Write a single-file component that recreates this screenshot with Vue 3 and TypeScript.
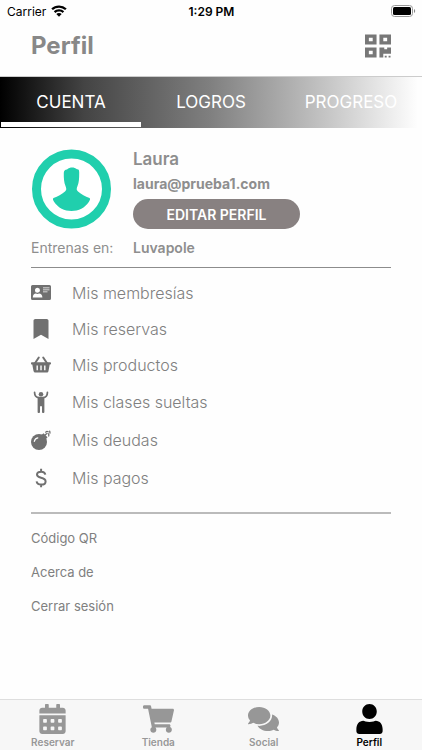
<script setup lang="ts">
import { ref } from 'vue'

type MenuIcon = 'card' | 'bookmark' | 'basket' | 'person' | 'bomb' | 'dollar'
type NavIcon = 'calendar' | 'cart' | 'comments' | 'user'

const tabs: string[] = ['CUENTA', 'LOGROS', 'PROGRESO']
const activeTab = ref<string>('CUENTA')

const menu: { icon: MenuIcon; label: string; tall: boolean }[] = [
  { icon: 'card', label: 'Mis membresías', tall: false },
  { icon: 'bookmark', label: 'Mis reservas', tall: false },
  { icon: 'basket', label: 'Mis productos', tall: false },
  { icon: 'person', label: 'Mis clases sueltas', tall: true },
  { icon: 'bomb', label: 'Mis deudas', tall: true },
  { icon: 'dollar', label: 'Mis pagos', tall: true },
]

const links: string[] = ['Código QR', 'Acerca de', 'Cerrar sesión']

const nav: { icon: NavIcon; label: string }[] = [
  { icon: 'calendar', label: 'Reservar' },
  { icon: 'cart', label: 'Tienda' },
  { icon: 'comments', label: 'Social' },
  { icon: 'user', label: 'Perfil' },
]
const activeNav = ref<string>('Perfil')
</script>

<template>
  <div class="screen">
    <div class="status">
      <span class="carrier">
        Carrier
        <svg class="wifi" viewBox="0 0 16 12" aria-hidden="true">
          <path d="M8 .4C5 .4 2.300 1.500.3 3.400L1.900 5.100A8.900 8.900 0 0 1 8 2.700c2.400 0 4.500.9 6.100 2.400l1.600-1.700A11.200 11.200 0 0 0 8 .4z" />
          <path d="M8 4.200c-2 0-3.800.8-5.200 2l1.600 1.700A5.400 5.400 0 0 1 8 6.500c1.400 0 2.700.5 3.600 1.400l1.600-1.700A7.700 7.700 0 0 0 8 4.200z" />
          <path d="M8 7.900c-1.100 0-2 .4-2.700 1.100L8 11.700 10.700 9A3.900 3.900 0 0 0 8 7.900z" />
        </svg>
      </span>
      <span class="time">1:29 PM</span>
      <svg class="battery" viewBox="0 0 25 12" aria-hidden="true">
        <rect x=".5" y=".5" width="21" height="11" rx="3" fill="none" stroke="#999" />
        <rect x="2" y="2" width="18" height="8" rx="1.500" />
        <path d="M23 4c1.600.5 1.600 3.500 0 4z" fill="#888" />
      </svg>
    </div>

    <header class="header">
      <h1>Perfil</h1>
      <button class="qr" type="button" aria-label="QR">
        <svg viewBox="0 0 27 24" aria-hidden="true">
          <path fill-rule="evenodd" d="M0 0h12v10.500H0zM4 3.500v3.500h4V3.500zM15 0h12v10.500H15zM19 3.500v3.500h4V3.500zM0 13.500h12V24H0zM4 17v3.500h4V17zM15 13.500h5v2h3v-2h4v6.500h-8v4h-4zM20.500 22h2v2h-2zM24.500 22h2v2h-2z" />
        </svg>
      </button>
    </header>

    <nav class="tabs">
      <button
        v-for="tab in tabs"
        :key="tab"
        type="button"
        class="tab"
        :class="{ active: tab === activeTab }"
        @click="activeTab = tab"
      >{{ tab }}</button>
    </nav>

    <main class="content">
      <section class="profile">
        <svg class="avatar" viewBox="0 0 80 80" aria-hidden="true">
          <circle cx="40.500" cy="40" r="35" fill="#fff" stroke="#20cfad" stroke-width="9" />
          <path fill="#20cfad" d="M36 20.500c3-2.500 7-2.500 10-.3 1.800-.2 2.200 1 2.200 3.300 0 6-.2 10-1.700 13.500-1 2.500-1.300 4 .5 5.500 3.500 3 7 4.800 11.500 6.500 1.200.5.300 2.500-.7 4C54 58.800 47.500 62 40.500 62s-13.500-3.200-17.300-9c-1-1.500-1.900-3.500-.7-4 4.500-1.700 8-3.500 11.500-6.500 1.800-1.500 1.500-3 .5-5.500-1.500-3.500-1.800-8-1.700-13 0-2.200 1.200-3.300 3.200-3.500z" />
        </svg>
        <div class="identity">
          <h2>Laura</h2>
          <p class="email">laura@prueba1.com</p>
          <button class="edit" type="button">EDITAR PERFIL</button>
        </div>
        <span class="gym-label">Entrenas en:</span>
        <span class="gym">Luvapole</span>
      </section>

      <ul class="menu">
        <li v-for="item in menu" :key="item.label">
          <a href="#" :class="{ tall: item.tall }">
            <svg v-if="item.icon === 'card'" viewBox="0 0 20 20" aria-hidden="true">
              <path fill-rule="evenodd" d="M1.500 2h17A1.500 1.500 0 0 1 20 3.500v12a1.500 1.500 0 0 1-1.500 1.500h-17A1.500 1.500 0 0 1 0 15.500v-12A1.500 1.500 0 0 1 1.500 2zM6.500 4.700a2.500 2.500 0 1 0 0 5 2.500 2.500 0 0 0 0-5zM1.800 14.500h9.600c0-2.600-1.600-4-3.300-4-1 .5-2.200.5-3.200 0-1.700 0-3.100 1.400-3.100 4zM12 4.400v.9h6.500V4.400zM12 6.400v.9h6.500V6.400zM12 8.400v.9h4.500V8.400z" />
            </svg>
            <svg v-else-if="item.icon === 'bookmark'" viewBox="0 0 20 20" aria-hidden="true">
              <path d="M2.500 20V1.800C2.500.8 3.300 0 4.300 0h11.400c1 0 1.800.8 1.800 1.800V20L10 15.700z" />
            </svg>
            <svg v-else-if="item.icon === 'basket'" viewBox="0 0 20 20" aria-hidden="true">
              <path d="m3.800 8.500 4-6M16.200 8.500l-4-6" fill="none" stroke="currentColor" stroke-width="2" stroke-linecap="round" />
              <path fill-rule="evenodd" d="M.8 7.300h18.400c.5 0 .8.300.8.700v.8c0 .4-.3.700-.8.700h-.5L17.500 16c-.2 1-.9 1.500-1.700 1.500H4.200c-.8 0-1.500-.6-1.700-1.500L1.300 9.500H.8A.7.700 0 0 1 0 8.800V8c0-.4.300-.7.800-.7zM5.500 10.500v4.700h1.400v-4.700zM9.300 10.500v4.700h1.400v-4.700zM13.100 10.500v4.700h1.400v-4.700z" />
            </svg>
            <svg v-else-if="item.icon === 'person'" viewBox="1 0 18 24" aria-hidden="true">
              <circle cx="10" cy="3.600" r="2.500" />
              <path d="M3 1.500C3 5 5 7 8 7.300h4c3-.3 5-2.300 5-5.800" fill="none" stroke="currentColor" stroke-width="1.900" stroke-linecap="round" />
              <path d="M6.300 6.500h7.400V23c0 .6-.4 1-.9 1H12c-.6 0-.9-.4-.9-1v-6.500H8.900V23c0 .6-.4 1-.9 1h-.8c-.6 0-.9-.4-.9-1z" />
            </svg>
            <svg v-else-if="item.icon === 'bomb'" viewBox="0 0 20 20" aria-hidden="true">
              <circle cx="8" cy="12" r="8" />
              <path d="m10.500 5 2-1.800 4 4-1.800 2z" />
              <path d="m14.200 5 1.300-1.300M14.800 2.200c.8-1.200 1.600-1 2.400-.5M17 3.500c.9.700 1.200 1.500.7 2.500M18.700 1.200l.3 2" fill="none" stroke="currentColor" stroke-width="1.300" stroke-linecap="round" />
              <path d="M3.300 11.300c.4-2 1.700-3.200 3.500-3.500" fill="none" stroke="#fff" stroke-width="1.200" stroke-linecap="round" />
            </svg>
            <svg v-else viewBox="0 0 20 20" aria-hidden="true">
              <path d="M14.300 6.700C14 4.600 12.400 3.700 10.200 3.700 7.700 3.700 6 4.700 6 6.600c0 2 1.500 2.600 4 3.200 2.800.7 4.600 1.500 4.600 3.600 0 2-1.700 3.200-4.400 3.200-2.600 0-4.300-1-4.600-3.200M10.100.8v2.900M10.100 16.500v2.700" fill="none" stroke="currentColor" stroke-width="2" />
            </svg>
            <span>{{ item.label }}</span>
          </a>
        </li>
      </ul>

      <ul class="links">
        <li v-for="link in links" :key="link"><a href="#">{{ link }}</a></li>
      </ul>
    </main>

    <nav class="bottom">
      <a
        v-for="item in nav"
        :key="item.label"
        href="#"
        :class="{ active: item.label === activeNav }"
        @click.prevent="activeNav = item.label"
      >
        <svg v-if="item.icon === 'calendar'" viewBox="0 0 448 512" aria-hidden="true">
          <path d="M0 464c0 26.500 21.500 48 48 48h352c26.500 0 48-21.500 48-48V192H0v272zm320-196c0-6.600 5.400-12 12-12h40c6.600 0 12 5.400 12 12v40c0 6.600-5.400 12-12 12h-40c-6.600 0-12-5.400-12-12v-40zm0 128c0-6.600 5.400-12 12-12h40c6.600 0 12 5.400 12 12v40c0 6.600-5.400 12-12 12h-40c-6.600 0-12-5.400-12-12v-40zM192 268c0-6.600 5.400-12 12-12h40c6.600 0 12 5.400 12 12v40c0 6.600-5.400 12-12 12h-40c-6.600 0-12-5.400-12-12v-40zm0 128c0-6.600 5.400-12 12-12h40c6.600 0 12 5.400 12 12v40c0 6.600-5.400 12-12 12h-40c-6.600 0-12-5.400-12-12v-40zM64 268c0-6.600 5.400-12 12-12h40c6.600 0 12 5.400 12 12v40c0 6.600-5.400 12-12 12H76c-6.600 0-12-5.400-12-12v-40zm0 128c0-6.600 5.400-12 12-12h40c6.600 0 12 5.400 12 12v40c0 6.600-5.400 12-12 12H76c-6.600 0-12-5.400-12-12v-40zM400 64h-48V16c0-8.800-7.200-16-16-16h-32c-8.800 0-16 7.200-16 16v48H160V16c0-8.800-7.200-16-16-16h-32c-8.800 0-16 7.200-16 16v48H48C21.500 64 0 85.500 0 112v48h448v-48c0-26.500-21.500-48-48-48z" />
        </svg>
        <svg v-else-if="item.icon === 'cart'" viewBox="0 0 576 512" aria-hidden="true">
          <path d="M528.120 301.319l47.273-208C578.806 78.301 567.391 64 551.990 64H159.208l-9.166-44.810C147.758 8.021 137.930 0 126.529 0H24C10.745 0 0 10.745 0 24v16c0 13.255 10.745 24 24 24h69.883l70.248 343.435C147.325 417.100 136 435.222 136 456c0 30.928 25.072 56 56 56s56-25.072 56-56c0-15.674-6.447-29.835-16.824-40h209.647C430.447 426.165 424 440.326 424 456c0 30.928 25.072 56 56 56s56-25.072 56-56c0-22.172-12.888-41.332-31.579-50.405l5.517-24.276c3.413-15.018-8.002-29.319-23.403-29.319H218.117l-6.545-32h293.145c11.206 0 20.920-7.754 23.403-18.681z" />
        </svg>
        <svg v-else-if="item.icon === 'comments'" viewBox="0 0 576 512" aria-hidden="true">
          <path d="M416 192c0-88.400-93.100-160-208-160S0 103.600 0 192c0 34.300 14.100 65.900 38 92-13.400 30.200-35.500 54.200-35.800 54.500-2.200 2.300-2.800 5.700-1.500 8.700S4.800 352 8 352c36.600 0 66.900-12.300 88.700-25 32.200 15.700 70.300 25 111.300 25 114.900 0 208-71.600 208-160zm122 220c23.900-26 38-57.700 38-92 0-66.900-53.500-124.200-129.300-148.100.9 6.600 1.300 13.300 1.300 20.100 0 105.900-107.700 192-240 192-10.800 0-21.300-.8-31.700-1.900C207.800 439.600 281.800 480 368 480c41 0 79.100-9.200 111.300-25 21.800 12.700 52.100 25 88.700 25 3.200 0 6.100-1.900 7.300-4.800 1.300-2.900.7-6.300-1.500-8.700-.3-.3-22.400-24.200-35.800-54.500z" />
        </svg>
        <svg v-else viewBox="0 0 448 512" aria-hidden="true">
          <path d="M224 256c70.700 0 124-57.300 124-128S294.700 0 224 0 100 57.300 100 128s53.300 128 124 128zM330 284c-14 0-52 22-106 22s-92-22-106-22C50 284 0 344 0 428v36c0 26.500 21.500 48 48 48h352c26.500 0 48-21.500 48-48v-36c0-84-50-144-118-144z" />
        </svg>
        <span>{{ item.label }}</span>
      </a>
    </nav>
  </div>
</template>

<style>
body {
  margin: 0;
  background: #fefefe;
}
</style>

<style scoped>
.screen {
  display: flex;
  flex-direction: column;
  min-height: 100vh;
  font-family: Inter, "Liberation Sans", sans-serif;
  color: #8e8e8e;
}

h1,
h2,
p,
ul {
  margin: 0;
  padding: 0;
}

ul {
  list-style: none;
}

a {
  color: inherit;
  text-decoration: none;
}

button {
  padding: 0;
  border: 0;
  background: none;
  font: inherit;
  color: inherit;
  cursor: pointer;
}

svg {
  display: block;
  flex: none;
  fill: currentColor;
}

.status {
  display: grid;
  grid-template-columns: 1fr auto 1fr;
  align-items: center;
  height: 22px;
  padding: 0 6px 0 7px;
  font-size: 12px;
  color: #000;
}

.carrier {
  display: flex;
  align-items: center;
  gap: 5px;
}

.wifi {
  width: 16px;
  height: 12px;
}

.time {
  font-weight: 600;
}

.battery {
  width: 25px;
  height: 12px;
  justify-self: end;
}

.header {
  display: flex;
  align-items: center;
  justify-content: space-between;
  height: 48px;
  padding: 0 31px 6px;
}

h1 {
  font-size: 24px;
  line-height: 30px;
  font-weight: 700;
  color: #888;
}

.qr {
  color: #777;
}

.qr svg {
  width: 26px;
  height: 24px;
}

.tabs {
  display: grid;
  grid-template-columns: repeat(3, 1fr);
  height: 50px;
  padding: 0 1px 1px;
  border-top: 1px solid #ccc;
  background: linear-gradient(90deg, #000 0%, #444 20%, #808080 50%, #c4c4c4 77%, #fefefe 99%);
}

.tab {
  padding-top: 5px;
  border-bottom: 5px solid transparent;
  font-size: 17px;
  color: #fff;
}

.tab.active {
  border-bottom-color: #fff;
}

.content {
  flex: 1;
  padding: 21px 31px;
}

.profile {
  display: grid;
  grid-template-columns: 80px 1fr;
  column-gap: 22px;
  padding-bottom: 9px;
  border-bottom: 1px solid #8c8c8c;
}

.avatar {
  width: 80px;
  height: 80px;
}

.identity {
  display: flex;
  flex-direction: column;
  align-items: flex-start;
}

h2 {
  font-size: 17px;
  line-height: 20px;
  font-weight: 600;
}

.email {
  padding: 5px 0;
  font-size: 14px;
  line-height: 20px;
  font-weight: 700;
}

.edit {
  width: 167px;
  height: 30px;
  border-radius: 15px;
  background: #888181;
  font-size: 14px;
  font-weight: 600;
  color: #fff;
}

.gym-label,
.gym {
  padding-top: 9px;
  font-size: 14px;
  line-height: 20px;
  white-space: nowrap;
}

.gym {
  font-weight: 600;
}

.menu {
  padding: 7px 0 15px;
  border-bottom: 2px solid #bbb;
}

.menu a {
  display: flex;
  align-items: center;
  gap: 21px;
  height: 36px;
  font-size: 16px;
  font-weight: 300;
  color: #808080;
}

.menu a.tall {
  height: 38px;
}

.menu svg {
  width: 20px;
  height: 20px;
  color: #707070;
}

.menu .tall svg {
  height: 22px;
}

.links {
  padding-top: 7px;
}

.links a {
  display: block;
  font-size: 13px;
  line-height: 34px;
  color: #808080;
}

.bottom {
  display: grid;
  grid-template-columns: repeat(4, 1fr);
  height: 50px;
  border-top: 1px solid #dedede;
  background: #f7f7f7;
}

.bottom a {
  display: flex;
  flex-direction: column;
  align-items: center;
  padding-top: 4px;
  font-size: 10px;
  line-height: 16px;
  font-weight: 600;
  color: #979797;
}

.bottom svg {
  width: 31px;
  height: 30px;
}

.bottom a.active {
  color: #000;
}
</style>
